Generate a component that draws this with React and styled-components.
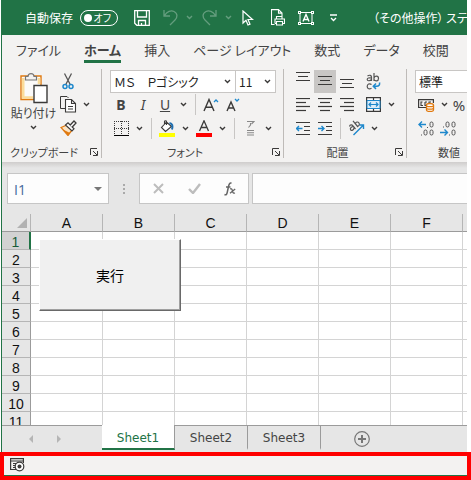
import React, { useState } from 'react'
import styled, { createGlobalStyle } from 'styled-components'

const GlobalStyle = createGlobalStyle`
    * {
        box-sizing: border-box;
    }
    body {
        margin: 0;
        background: #fff;
        font-family: "Noto Sans CJK JP", "Noto Sans", sans-serif;
        font-feature-settings: "palt";
        font-size: 12px;
        color: #444;
    }
    button, input, select {
        font: inherit;
        font-feature-settings: inherit;
        color: inherit;
        border: 0;
        padding: 0;
        margin: 0;
        background: transparent;
        border-radius: 0;
    }
    svg {
        display: block;
        flex: none;
    }
`

const Page = styled.div`
    height: 100vh;
    display: flex;
    flex-direction: column;
`

const Workbook = styled.div`
    flex: 1;
    min-height: 0;
    display: flex;
    flex-direction: column;
    margin: 0 4px 0 1px;
    border-left: 1px solid #217346;
    background: #e6e6e6;
    overflow: hidden;
`

/* title bar */

const TitleBar = styled.header`
    flex: none;
    display: flex;
    align-items: center;
    height: 35px;
    padding-left: 23px;
    background: #217346;
    color: #fff;
    white-space: nowrap;
    overflow: hidden;
`

const AutoSave = styled.label`
    display: flex;
    align-items: center;
    gap: 7px;
    margin-right: 12px;

    input {
        position: absolute;
        opacity: 0;
    }
`

const Switch = styled.span`
    display: flex;
    align-items: center;
    justify-content: space-between;
    width: 38px;
    height: 16px;
    padding: 0 6px 0 3px;
    border: 1px solid #fff;
    border-radius: 8px;
    font-size: 10px;
    line-height: 14px;

    &::before {
        content: '';
        width: 8px;
        height: 8px;
        border-radius: 50%;
        background: #fff;
    }
`

const QuickButton = styled.button`
    display: flex;
    align-items: center;
    justify-content: center;
    flex: none;
    width: ${props => props.$narrow ? '15px' : '24px'};
    height: 24px;
    margin-right: ${props => props.$gap || 0}px;
    opacity: ${props => props.disabled ? 0.3 : 1};
`

const FileName = styled.span`
    margin-left: 32px;
`

/* ribbon */

const TabList = styled.nav`
    flex: none;
    display: flex;
    gap: 23px;
    height: 34px;
    padding: 0 14px;
    background: #f3f2f1;
    overflow: hidden;
`

const Tab = styled.button`
    flex: none;
    height: 28px;
    padding-top: 5px;
    font-size: 13px;
    line-height: 20px;
    white-space: nowrap;
    font-weight: ${props => props.$active ? 700 : 400};
    border-bottom: 3px solid ${props => props.$active ? '#217346' : 'transparent'};
`

const Ribbon = styled.section`
    flex: none;
    display: flex;
    height: 93px;
    background: #f3f2f1;
    overflow: hidden;
`

const Group = styled.div`
    flex: none;
    display: flex;
    flex-direction: column;
    padding: 0 7px 0 8px;
    margin-bottom: 4px;
    border-right: 1px solid #bebbb8;
`

const GroupFooter = styled.div`
    display: flex;
    align-items: center;
    height: 24px;
    margin: 0 -4px 0 -8px;
    font-size: 11px;
    line-height: 24px;

    span {
        flex: 1;
        text-align: center;
    }
`

const Launcher = styled.button`
    display: flex;
    align-items: center;
    justify-content: flex-end;
    width: 12px;
    height: 16px;
`

const Rows = styled.div`
    display: grid;
    grid-template-rows: 24px 23px 24px;
`

const Row = styled.div`
    display: flex;
    align-items: center;
`

const Columns = styled.div`
    display: flex;
`

const ToolButton = styled.button`
    display: flex;
    align-items: center;
    justify-content: center;
    flex: none;
    width: 22px;
    height: 23px;
    font-family: "Noto Sans", sans-serif;
    font-size: 14px;
    background: ${props => props.$on ? '#c8c6c4' : 'transparent'};
`

const PercentButton = styled(ToolButton)`
    width: 14px;
    font-size: 15px;
`

const ArrowButton = styled.button`
    display: flex;
    align-items: center;
    justify-content: center;
    flex: none;
    width: 15px;
    height: 23px;
`

const Divider = styled.i`
    width: 1px;
    height: 21px;
    margin: 0 4px;
    background: #c8c6c4;
`

const Spacer = styled.i`
    width: 4px;
`

const PasteButton = styled.button`
    display: flex;
    flex-direction: column;
    align-items: center;
    width: 47px;
    padding-top: 4px;
    line-height: 18px;
    white-space: nowrap;

    span {
        margin-bottom: 3px;
    }
`

const Combo = styled.div`
    display: grid;
    flex: none;
    align-items: center;
    width: ${props => props.$width}px;
    height: 23px;
    border: 1px solid #c8c6c4;
    background: #fff;

    & + & {
        border-left: 0;
    }
    select {
        grid-area: 1 / 1;
        width: 100%;
        height: 21px;
        padding-left: 3px;
        appearance: none;
        color: #222;
    }
    svg {
        grid-area: 1 / 1;
        justify-self: end;
        margin-right: 4px;
        pointer-events: none;
    }
`

const Bold = styled.b`
    font-size: 14px;
`

/* formula bar */

const FormulaBar = styled.div`
    flex: none;
    display: flex;
    align-items: stretch;
    height: 52px;
    padding: 11px 0 10px 5px;
    background: linear-gradient(#cfcdcc, #e6e6e6 6px);
`

const NameBox = styled.div`
    display: flex;
    align-items: center;
    flex: none;
    width: 102px;
    padding: 0 6px;
    border: 1px solid #c6c6c6;
    background: #fdfdfd;

    input {
        flex: 1;
        min-width: 0;
        padding-top: 2px;
        font-family: "Open Sans", sans-serif;
        font-size: 14px;
        color: #44689c;
        outline: none;
    }
`

const Grip = styled.div`
    display: flex;
    align-items: center;
    justify-content: center;
    flex: none;
    width: 30px;
`

const FormulaTools = styled.div`
    display: flex;
    align-items: center;
    flex: none;
    width: 110px;
    margin-right: 3px;
    border: 1px solid #c6c6c6;
    background: #fdfdfd;

    button {
        flex: 1;
        display: flex;
        justify-content: center;
    }
`

const FormulaInput = styled.input`
    flex: 1;
    min-width: 0;
    padding: 0 6px;
    border: 1px solid #c6c6c6;
    border-right: 0;
    background: #fdfdfd;
    outline: none;
`

/* grid */

const Sheet = styled.div`
    position: relative;
    flex: 1;
    min-height: 0;
    overflow: hidden;
    background: #fff;
`

const Grid = styled.table`
    width: max-content;
    min-width: 100%;
    table-layout: fixed;
    border-collapse: separate;
    border-spacing: 0;
    font-family: "Liberation Sans", Arial, sans-serif;
    font-size: 14px;
    color: #111;

    td {
        height: 18px;
        padding: 0;
        border-right: 1px solid #d4d4d4;
        border-bottom: 1px solid #d4d4d4;
    }
`

const Corner = styled.td`
    && {
        width: 29px;
        height: 18px;
        border-right: 1px solid #b5b5b5;
        border-bottom: 1px solid #9b9b9b;
        background: #e6e6e6;
    }
    svg {
        margin: 0 3px 0 auto;
    }
`

const ColumnHead = styled.th`
    width: 72px;
    height: 18px;
    padding: 2px 0 0;
    line-height: 15px;
    font-weight: 400;
    border-bottom: 1px solid #9b9b9b;
    border-right: 1px solid #b5b5b5;
    background: #e6e6e6;
`

const RowHead = styled.th`
    width: 29px;
    height: 18px;
    padding: 3px 0 0;
    line-height: 14px;
    font-weight: 400;
    border-right: ${props => props.$active ? '2px solid #217346' : '1px solid #9b9b9b'};
    border-bottom: 1px solid #b5b5b5;
    color: ${props => props.$active ? '#185c37' : '#111'};
    background: ${props => props.$active ? '#d2d2d2' : '#e6e6e6'};
`

/* form control that floats over the cells */
const RunButton = styled.button`
    position: absolute;
    left: 37px;
    top: 25px;
    width: 142px;
    height: 72px;
    border: 1px solid #fff;
    border-right-color: #696969;
    border-bottom-color: #696969;
    box-shadow: inset -1px -1px #a0a0a0;
    background: #f0f0f0;
    font-size: 14px;
    line-height: 16px;
    color: #000;
`

/* sheet tabs */

const SheetBar = styled.div`
    flex: none;
    display: flex;
    height: 27px;
    border-top: 1px solid #9b9b9b;
    background: #e6e6e6;
`

const SheetNav = styled.div`
    display: flex;
    align-items: center;
    gap: 14px;
    flex: none;
    width: 100px;
    padding: 0 0 0 22px;

    button {
        width: 14px;
        height: 20px;
        display: flex;
        align-items: center;
        justify-content: center;
    }
`

const SheetTab = styled.button`
    flex: none;
    width: 73px;
    margin-top: ${props => props.$active ? '-1px' : 0};
    height: ${props => props.$active ? '25px' : '24px'};
    padding-top: ${props => props.$active ? '3px' : '2px'};
    font-family: "DejaVu Sans", Verdana, sans-serif;
    font-size: 12px;
    line-height: 20px;
    color: ${props => props.$active ? '#217346' : '#444'};
    background: ${props => props.$active ? '#fff' : 'transparent'};
    border-right: 1px solid #9b9b9b;
    border-bottom: 2px solid ${props => props.$active ? '#217346' : 'transparent'};
`

const AddSheet = styled.button`
    display: flex;
    align-items: center;
    margin-left: 33px;
`

const StatusBar = styled.footer`
    flex: none;
    height: 28px;
    border: 4px solid #ff0000;
    background: #f3f2f1;
    box-shadow: inset 0 -1px #217346;

    button {
        display: block;
        padding: 2px 6px;
    }
`

const DARK = '#3b3a39'
const BLUE = '#1e88cc'

const Svg = ({ w, h, children }) => (
    <svg width={w} height={h} viewBox={`0 0 ${w} ${h}`} fill="none" stroke={DARK} aria-hidden="true">
        {children}
    </svg>
)

const Chevron = ({ color = DARK }) => (
    <Svg w={7} h={5}><path d="M1 1l2.5 2.5L6 1" stroke={color} strokeWidth="1.4" /></Svg>
)

const Arrow = ({ label }) => <ArrowButton aria-label={label}><Chevron /></ArrowButton>

const SaveIcon = () => (
    <Svg w={16} h={16}>
        <path d="M.7.7h14.6v14.6H2.8L.7 13.2zM3.5 1v6h9V1M4.5 15v-4.500h7V15M7.500 15v-2" stroke="#fff" strokeWidth="1.3" />
    </Svg>
)

const UndoIcon = () => (
    <Svg w={15} h={17}><path d="M1 1v6h6M1.500 6.500C4 2.500 8 1 11 2.500c4 2 3.500 6 1 8.500l-5 5" stroke="#fff" strokeWidth="1.3" /></Svg>
)

const RedoIcon = () => (
    <Svg w={15} h={17}><path d="M14 1v6H8M13.500 6.500C11 2.500 7 1 4 2.500 0 4.500.5 8.500 3 11l5 5" stroke="#fff" strokeWidth="1.3" /></Svg>
)

const PointerIcon = () => (
    <Svg w={12} h={16}><path d="M1 1v12l3-2.800L6 15l2-.8-2-4.700h4.500z" stroke="#fff" strokeWidth="1.2" /></Svg>
)

const PrintIcon = () => (
    <Svg w={14} h={17}>
        <path d="M3.500 15.500h-3V.6h7l3.500 3.500v4M7.500.6v3.500H11M5.500 10V7.500h5.500V10M4 14.500V10h9.500v4.500h-2M4 14.500h1.500M5.500 12.500h6v3.500h-6z" stroke="#fff" strokeWidth="1.1" />
    </Svg>
)

const TextBoxIcon = () => (
    <Svg w={16} h={14}>
        <path d="M2 1.500h12v11H2z" stroke="#fff" />
        <path d="M5 10.500L8 3.500l3 7M6 8.500h4" stroke="#fff" strokeWidth="1.4" />
        <path d="M0 0h3v3H0zM13 0h3v3h-3zM0 11h3v3H0zM13 11h3v3h-3z" fill="#fff" stroke="none" />
        <path d="M1 1h1v1H1zM14 1h1v1h-1zM1 12h1v1H1zM14 12h1v1h-1z" fill="#217346" stroke="none" />
    </Svg>
)

const MoreIcon = () => (
    <Svg w={7} h={8}><path d="M0 1h7M1 4l2.500 2.500L6 4" stroke="#fff" strokeWidth="1.3" /></Svg>
)

const PasteIcon = () => (
    <Svg w={28} h={31}>
        <path d="M1 3h20v23.500H1z" fill="#fbfaf9" stroke="#e07a10" strokeWidth="1.4" />
        <path d="M3.200 5v19.500h10" stroke="#fbdc9a" strokeWidth="2.600" />
        <path d="M19 5v6" stroke="#fbdc9a" strokeWidth="2.600" />
        <path d="M5.500 7V3.500H8C8 1.500 9.300.6 11 .6s3 .9 3 2.900h2.500V7z" fill="#f3f2f1" stroke="#777" strokeWidth="1.200" />
        <path d="M14 12.500h13v17H14z" fill="#fff" strokeWidth="1.400" />
    </Svg>
)

const CutIcon = () => (
    <Svg w={12} h={17}>
        <path d="M2.500.5l5.700 11M9.500.5L3.800 11.500" stroke="#555" strokeWidth="1.300" />
        <circle cx="3" cy="13.500" r="2" stroke={BLUE} strokeWidth="1.500" />
        <circle cx="9" cy="13.500" r="2" stroke={BLUE} strokeWidth="1.500" />
    </Svg>
)

const CopyIcon = () => (
    <Svg w={17} h={17}>
        <path d="M5.500 12.500h-5V.5H7L8.500 2" />
        <path d="M5.500 3.500h6l4 4v8.500h-10zM11.500 3.500v4h4M8 10.500h5M8 13h5" fill="#fff" strokeWidth="1.100" />
    </Svg>
)

const PainterIcon = () => (
    <Svg w={17} h={16}>
        <path d="M1 7.500L7 5l5 5-4 5.500z" fill="#fbe3c3" stroke="#e07a10" strokeWidth="1.300" />
        <path d="M3 9.500l7 3.500-2 2.500z" fill="#e07a10" stroke="none" />
        <path d="M5.500 5L8 2.800l6 6L12 11z" fill="#fff" strokeWidth="1.200" />
        <path d="M10 5.200L14 1l2 2-4 4.200" fill="#fff" strokeWidth="1.300" />
    </Svg>
)

const LauncherIcon = () => (
    <Svg w={8} h={8}><path d="M.5 7V.5H7M3 3l4 4M7.500 3v4.500H3" strokeWidth="1" /></Svg>
)

const BorderIcon = () => (
    <Svg w={15} h={15}>
        <path d="M0 .5h15M0 7.500h15M.5 0v14M7.500 0v14M14.500 0v14" strokeDasharray="1 1" />
        <path d="M0 14.500h15" stroke="#000" />
    </Svg>
)

const FillIcon = () => (
    <Svg w={16} h={17}>
        <path d="M7.500 2L2.500 7.500l4 4 6-5zM5.500 4.500V1.500c0-1 2-1 2 0V5" fill="#fff" strokeWidth="1.100" />
        <path d="M10.500 3c3 .5 3.500 3 2.500 6.500" stroke="#1f6fb0" strokeWidth="2" />
        <path d="M0 13h16v4H0z" fill="#ffff00" stroke="none" />
    </Svg>
)

const FontColorIcon = () => (
    <Svg w={16} h={17}>
        <path d="M3.500 11L8 .800 12.500 11M5 7.500h6" strokeWidth="1.300" />
        <path d="M0 13h16v4H0z" fill="#ff0000" stroke="none" />
    </Svg>
)

const GrowIcon = () => (
    <Svg w={16} h={14}>
        <path d="M1 13L6 1.500 11 13M2.700 9.200h6.600" strokeWidth="1.400" />
        <path d="M11 4l2-2 2 2" stroke={BLUE} strokeWidth="1.300" />
    </Svg>
)

const ShrinkIcon = () => (
    <Svg w={14} h={14}>
        <path d="M1 13l4-9 4 9M2.500 10h5" strokeWidth="1.400" />
        <path d="M9 1l2 2 2-2" stroke={BLUE} strokeWidth="1.300" />
    </Svg>
)

const PhoneticIcon = () => (
    <Svg w={9} h={16}>
        <path d="M1 1.500h7L5.500 4M4.500 3v2L2.500 7.500M1 10.500h7M1 12.700h7M1 15h7" stroke="#888" strokeWidth="1.100" />
    </Svg>
)

/* each line is [x, width] inside a 14px box */
const LinesIcon = ({ lines, pitch = 4 }) => (
    <Svg w={14} h={14}>
        {lines.map(([x, width], i) => (
            <path key={i} d={`M${x} ${i * pitch + 0.5}h${width}`} strokeWidth="1.200" />
        ))}
    </Svg>
)

const VerticalIcon = ({ top }) => (
    <Svg w={14} h={20}>
        <path d={`M0 ${top + 0.5}h14M2 ${top + 4.500}h10M0 ${top + 8.500}h14`} strokeWidth="1.200" />
    </Svg>
)

const WrapIcon = () => (
    <Svg w={15} h={17}>
        <path d="M1.500 3c2-1.500 4-.5 4 1v4M5.500 5C3 4.500 1.200 5 1.200 6.500S4 8.300 5.500 6.500M8 0v8M8 5c1-2.500 4.500-2.500 4.500.5S9 8.500 8 6.500M5.500 11.500c-2-1.500-4.300-.5-4.300 2s2.300 3 4.300 1.700" stroke="#555" strokeWidth="1.200" />
        <path d="M13.500 9.500c.5 2.500-.5 3.700-3 3.700H7.500M10 10.500l-2.700 2.700 2.700 2.700" stroke={BLUE} strokeWidth="1.500" />
    </Svg>
)

const MergeIcon = () => (
    <Svg w={15} h={15}>
        <path d="M.6.6h13.800v13.800H.6zM7.500 1v3M7.500 11v3" strokeWidth="1.200" fill="#fff" />
        <path d="M1 3.500h13v8H1z" fill="#dcecf8" stroke={BLUE} />
        <path d="M3 7.500h9M5 5.500l-2 2 2 2M10 5.500l2 2-2 2" stroke={BLUE} strokeWidth="1.200" />
    </Svg>
)

const IndentIcon = ({ right }) => (
    <Svg w={14} h={13}>
        <path d="M0 .5h14M8 4.500h6M8 8.500h6M0 12.500h14" />
        <path d={right ? 'M0 6.500h6M3.500 4L6 6.500 3.500 9' : 'M6.500 6.500h-6M3 4L.5 6.500 3 9'} stroke={BLUE} strokeWidth="1.400" />
    </Svg>
)

const OrientationIcon = () => (
    <Svg w={17} h={16}>
        <path d="M1.500 6.500c.5-2 2.500-2 3.500-.5l2.500 3M5 6.500C3 7 1.700 8.500 2.700 9.800s3 .2 3.300-2M5 .800L10 7M7.500 4c0-2.300 2.500-2.600 3.500-1s0 3.500-2 3.300" stroke="#555" strokeWidth="1.200" />
        <path d="M5.500 15L15.500 5M11.500 5h4v4" stroke={BLUE} strokeWidth="1.400" />
    </Svg>
)

const CurrencyIcon = () => (
    <Svg w={17} h={14}>
        <path d="M8 9.500H.6V1.600h14.800V5" strokeWidth="1.200" />
        <path d="M4.500 4H3v3.500h2M7 4v3.500h1.500M9 4h-2M11 6V4h2" strokeWidth="1.100" />
        <path d="M8.500 7v5c0 2 7 2 7 0V7c0-2-7-2-7 0z" fill="#fff" stroke="#e07a10" strokeWidth="1.300" />
        <path d="M8.500 7.500c0 1.600 7 1.600 7 0M8.500 10c0 1.600 7 1.600 7 0" stroke="#e07a10" strokeWidth="1.300" />
    </Svg>
)

const Zero = ({ x, y }) => <rect x={x} y={y} width="3" height="5" rx="1.500" stroke="#555" />
const Dot = ({ x, y }) => <path d={`M${x} ${y}h1`} stroke="#555" />

const IncreaseDecimalIcon = () => (
    <Svg w={16} h={15}>
        <path d="M8 3.500H1M4 .5l-3 3 3 3" stroke={BLUE} strokeWidth="1.400" />
        <Dot x={9} y={6.500} /><Zero x={12} y={1} />
        <Dot x={3} y={14} /><Zero x={6} y={9} /><Zero x={12} y={9} />
    </Svg>
)

const DecreaseDecimalIcon = () => (
    <Svg w={16} h={15}>
        <path d="M0 11.500h7M4.500 8.500l3 3-3 3" stroke={BLUE} strokeWidth="1.400" />
        <Dot x={3} y={6} /><Zero x={6} y={1} /><Zero x={12} y={1} />
        <Dot x={9} y={14} /><Zero x={12} y={9} />
    </Svg>
)

const FxIcon = () => (
    <Svg w={12} h={14}>
        <path d="M7.500 1.300C5.800.5 5 2 4.500 4.500l-1.300 6C2.800 12.600 2 13.300.5 12.500M2 5h4.500" stroke="#666" strokeWidth="1.500" />
        <path d="M6 7c1.500-.7 2 0 2.500 2s1 2.500 2.500 2M11.200 7L6 11.200" stroke="#666" strokeWidth="1.300" />
    </Svg>
)

const MacroIcon = () => (
    <Svg w={15} h={14}>
        <path d="M6 11.500H.6V.6h12.800V5M.6 3h12.800M3 5.500h3M3 7.500h2M3 9.500h2" strokeWidth="1.200" />
        <circle cx="9.500" cy="8.500" r="4.300" fill="#fff" strokeWidth="1.200" />
        <circle cx="9.500" cy="8.500" r="2" fill={DARK} stroke="none" />
    </Svg>
)

const tabs = ['ファイル', 'ホーム', '挿入', 'ページ レイアウト', '数式', 'データ', '校閲']
const columns = ['A', 'B', 'C', 'D', 'E', 'F']
const rows = [1, 2, 3, 4, 5, 6, 7, 8, 9, 10, 11]
const sheets = ['Sheet1', 'Sheet2', 'Sheet3']

const Select = ({ label, value, width }) => (
    <Combo $width={width}>
        <select aria-label={label} defaultValue={value}>
            <option>{value}</option>
        </select>
        <Chevron />
    </Combo>
)

const Footer = ({ title, hideLauncher }) => (
    <GroupFooter>
        <span>{title}</span>
        {!hideLauncher && <Launcher aria-label={title}><LauncherIcon /></Launcher>}
    </GroupFooter>
)

const ClipboardGroup = () => (
    <Group>
        <Columns>
            <PasteButton>
                <PasteIcon />
                <span>貼り付け</span>
                <Chevron />
            </PasteButton>
            <Rows>
                <Row><ToolButton aria-label="切り取り"><CutIcon /></ToolButton></Row>
                <Row>
                    <ToolButton aria-label="コピー"><CopyIcon /></ToolButton>
                    <Arrow label="コピー" />
                </Row>
                <Row><ToolButton aria-label="書式"><PainterIcon /></ToolButton></Row>
            </Rows>
        </Columns>
        <Footer title="クリップボード" />
    </Group>
)

const FontGroup = () => (
    <Group>
        <Rows>
            <Row>
                <Select label="フォント" value="ＭＳ　Ｐゴシック" width={126} />
                <Select label="サイズ" value="11" width={40} />
            </Row>
            <Row>
                <ToolButton><Bold>B</Bold></ToolButton>
                <ToolButton><i>I</i></ToolButton>
                <ToolButton><u>U</u></ToolButton>
                <Arrow label="下線" />
                <Divider />
                <ToolButton aria-label="拡大"><GrowIcon /></ToolButton>
                <ToolButton aria-label="縮小"><ShrinkIcon /></ToolButton>
            </Row>
            <Row>
                <ToolButton aria-label="罫線"><BorderIcon /></ToolButton>
                <Arrow label="罫線" />
                <Divider />
                <ToolButton aria-label="塗りつぶし"><FillIcon /></ToolButton>
                <Arrow label="塗りつぶし" />
                <ToolButton aria-label="文字の色"><FontColorIcon /></ToolButton>
                <Arrow label="文字の色" />
                <Divider />
                <ToolButton aria-label="ふりがな"><PhoneticIcon /></ToolButton>
                <Arrow label="ふりがな" />
            </Row>
        </Rows>
        <Footer title="フォント" />
    </Group>
)

const AlignmentGroup = () => (
    <Group>
        <Rows>
            <Row>
                <ToolButton aria-label="上揃え"><VerticalIcon top={1} /></ToolButton>
                <ToolButton aria-label="上下中央" $on><VerticalIcon top={5} /></ToolButton>
                <ToolButton aria-label="下揃え"><VerticalIcon top={8} /></ToolButton>
                <Spacer />
                <ToolButton aria-label="折り返し"><WrapIcon /></ToolButton>
            </Row>
            <Row>
                <ToolButton aria-label="左揃え"><LinesIcon lines={[[0, 14], [0, 10], [0, 14], [0, 10]]} /></ToolButton>
                <ToolButton aria-label="中央揃え"><LinesIcon lines={[[0, 14], [2, 10], [0, 14], [2, 10]]} /></ToolButton>
                <ToolButton aria-label="右揃え"><LinesIcon lines={[[0, 14], [4, 10], [0, 14], [4, 10]]} /></ToolButton>
                <Spacer />
                <ToolButton aria-label="結合"><MergeIcon /></ToolButton>
                <Arrow label="結合" />
            </Row>
            <Row>
                <ToolButton aria-label="インデントを減らす"><IndentIcon /></ToolButton>
                <ToolButton aria-label="インデントを増やす"><IndentIcon right /></ToolButton>
                <Divider />
                <ToolButton aria-label="方向"><OrientationIcon /></ToolButton>
                <Arrow label="方向" />
            </Row>
        </Rows>
        <Footer title="配置" />
    </Group>
)

const NumberGroup = () => (
    <Group>
        <Rows>
            <Row><Select label="表示形式" value="標準" width={72} /></Row>
            <Row>
                <ToolButton aria-label="通貨"><CurrencyIcon /></ToolButton>
                <Arrow label="通貨" />
                <PercentButton>%</PercentButton>
            </Row>
            <Row>
                <ToolButton aria-label="小数点以下を増やす"><IncreaseDecimalIcon /></ToolButton>
                <ToolButton aria-label="小数点以下を減らす"><DecreaseDecimalIcon /></ToolButton>
            </Row>
        </Rows>
        <Footer title="数値" hideLauncher />
    </Group>
)

const App = () => {

    const [activeTab, setActiveTab] = useState('ホーム')
    const [activeSheet, setActiveSheet] = useState('Sheet1')

    return (
        <Page>
            <GlobalStyle />
            <Workbook>
                <TitleBar>
                    <AutoSave>
                        自動保存
                        <input type="checkbox" />
                        <Switch>オフ</Switch>
                    </AutoSave>
                    <QuickButton aria-label="保存" $gap={4}><SaveIcon /></QuickButton>
                    <QuickButton aria-label="元に戻す" disabled><UndoIcon /></QuickButton>
                    <QuickButton aria-label="元に戻す" disabled $narrow><Chevron color="#fff" /></QuickButton>
                    <QuickButton aria-label="やり直し" disabled><RedoIcon /></QuickButton>
                    <QuickButton aria-label="やり直し" disabled $narrow><Chevron color="#fff" /></QuickButton>
                    <QuickButton aria-label="選択" $gap={6}><PointerIcon /></QuickButton>
                    <QuickButton aria-label="印刷" $gap={4}><PrintIcon /></QuickButton>
                    <QuickButton aria-label="テキスト ボックス" $gap={8}><TextBoxIcon /></QuickButton>
                    <QuickButton aria-label="カスタマイズ" $narrow><MoreIcon /></QuickButton>
                    <FileName>（その他操作） ステ</FileName>
                </TitleBar>

                <TabList>
                    {tabs.map(name => (
                        <Tab key={name} $active={name === activeTab} onClick={() => setActiveTab(name)}>{name}</Tab>
                    ))}
                </TabList>

                <Ribbon>
                    <ClipboardGroup />
                    <FontGroup />
                    <AlignmentGroup />
                    <NumberGroup />
                </Ribbon>

                <FormulaBar>
                    <NameBox>
                        <input aria-label="名前" defaultValue="I1" />
                        <Svg w={8} h={4}><path d="M0 0h8L4 4z" fill="#777" stroke="none" /></Svg>
                    </NameBox>
                    <Grip>
                        <Svg w={2} h={10}><path d="M1 0v10" stroke="#aaa" strokeWidth="2" strokeDasharray="2 2" /></Svg>
                    </Grip>
                    <FormulaTools>
                        <button aria-label="キャンセル">
                            <Svg w={11} h={11}><path d="M1 1l9 9M10 1l-9 9" stroke="#bdbdbd" strokeWidth="2" /></Svg>
                        </button>
                        <button aria-label="入力">
                            <Svg w={13} h={11}><path d="M1 6l4 4 7-9" stroke="#bdbdbd" strokeWidth="2.400" /></Svg>
                        </button>
                        <button aria-label="関数の挿入"><FxIcon /></button>
                    </FormulaTools>
                    <FormulaInput aria-label="数式バー" />
                </FormulaBar>

                <Sheet>
                    <Grid>
                        <thead>
                            <tr>
                                <Corner>
                                    <Svg w={10} h={10}><path d="M10 0v10H0z" fill="#b2b2b2" stroke="none" /></Svg>
                                </Corner>
                                {columns.map(name => <ColumnHead key={name}>{name}</ColumnHead>)}
                                <ColumnHead />
                            </tr>
                        </thead>
                        <tbody>
                            {rows.map(row => (
                                <tr key={row}>
                                    <RowHead $active={row === 1}>{row}</RowHead>
                                    {columns.map(name => <td key={name} />)}
                                    <td />
                                </tr>
                            ))}
                        </tbody>
                    </Grid>
                    <RunButton>実行</RunButton>
                </Sheet>

                <SheetBar>
                    <SheetNav>
                        <button aria-label="前のシート">
                            <Svg w={4} h={8}><path d="M4 0v8L0 4z" fill="#b5b5b5" stroke="none" /></Svg>
                        </button>
                        <button aria-label="次のシート">
                            <Svg w={4} h={8}><path d="M0 0v8l4-4z" fill="#b5b5b5" stroke="none" /></Svg>
                        </button>
                    </SheetNav>
                    {sheets.map(name => (
                        <SheetTab key={name} $active={name === activeSheet} onClick={() => setActiveSheet(name)}>{name}</SheetTab>
                    ))}
                    <AddSheet aria-label="新しいシート">
                        <Svg w={16} h={16}>
                            <circle cx="8" cy="8" r="7.300" stroke="#777" strokeWidth="1.200" />
                            <path d="M8 4v8M4 8h8" stroke="#777" strokeWidth="2" />
                        </Svg>
                    </AddSheet>
                </SheetBar>
            </Workbook>

            <StatusBar>
                <button aria-label="マクロの記録"><MacroIcon /></button>
            </StatusBar>
        </Page>
    )
}

export default App
